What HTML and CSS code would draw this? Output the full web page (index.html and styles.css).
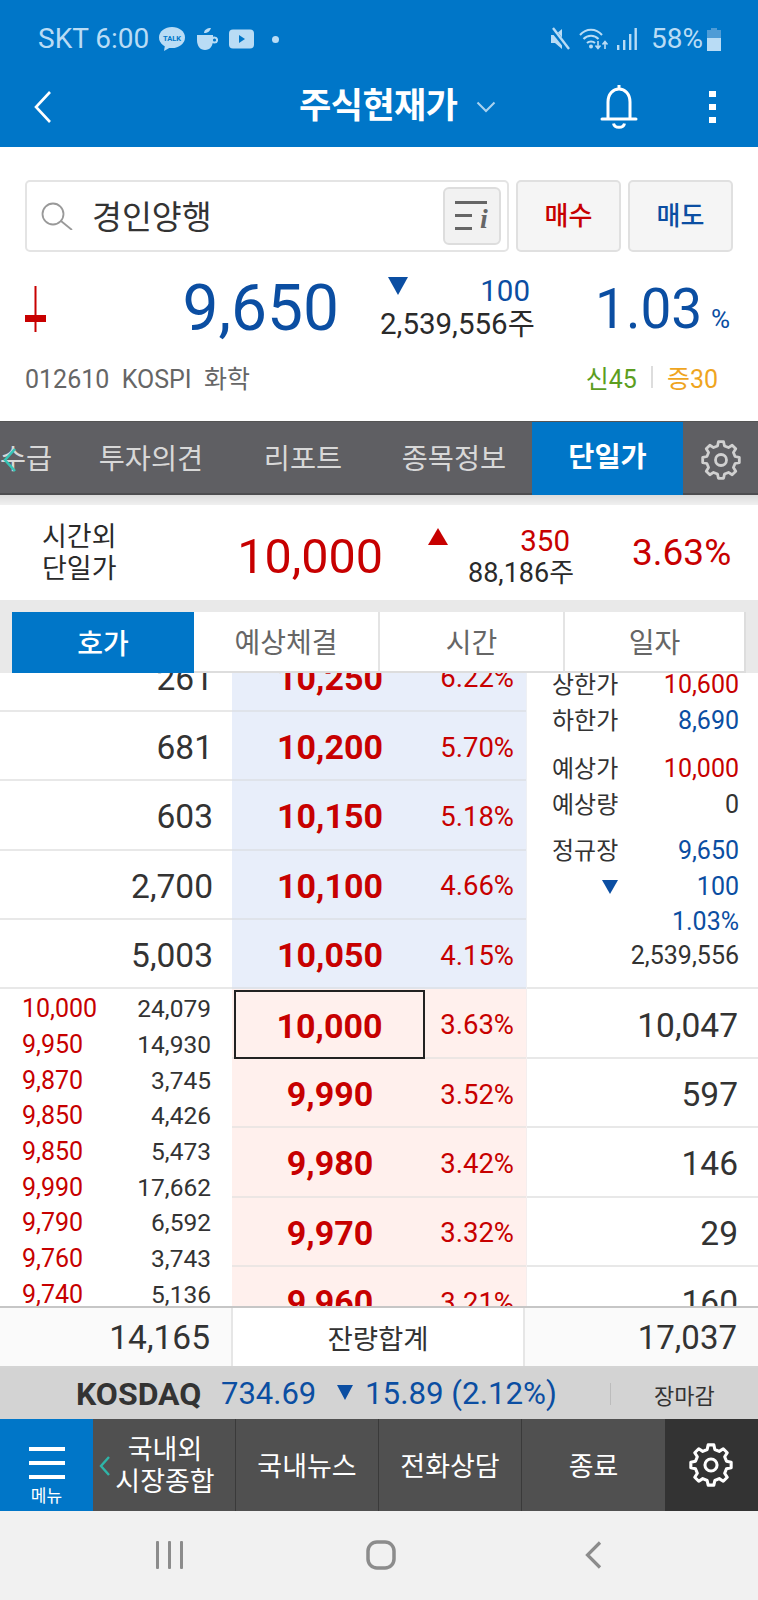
FILE: index.html
```html
<!DOCTYPE html>
<html lang="ko">
<head>
<meta charset="utf-8">
<title>주식현재가</title>
<link rel="stylesheet" href="styles.css">
</head>
<body>
<svg class="defs" width="0" height="0" aria-hidden="true">
  <symbol id="gear" viewBox="0 0 40 40">
    <polygon points="16.5,5.93 17.43,1.68 22.57,1.68 23.5,5.93 27.47,7.58 31.14,5.23 34.77,8.86 32.42,12.53 34.07,16.5 38.32,17.43 38.32,22.57 34.07,23.5 32.42,27.47 34.77,31.14 31.14,34.77 27.47,32.42 23.5,34.07 22.57,38.32 17.43,38.32 16.5,34.07 12.53,32.42 8.86,34.77 5.23,31.14 7.58,27.47 5.93,23.5 1.68,22.57 1.68,17.43 5.93,16.5 7.58,12.53 5.23,8.86 8.86,5.23 12.53,7.58" fill="none" stroke="currentColor" stroke-width="2.8" stroke-linejoin="round"/>
    <circle cx="20" cy="20" r="5.5" fill="none" stroke="currentColor" stroke-width="2.8"/>
  </symbol>
</svg>
<div class="screen">
  <header class="header">
    <div class="status">
      <span class="status-time">SKT 6:00</span>
      <svg class="ic-talk" viewBox="0 0 26 24"><ellipse cx="13" cy="10.5" rx="13" ry="10.5" fill="#b9dcf5"/><path d="M6 18l-1 6 7-4z" fill="#b9dcf5"/><text x="13" y="14" class="talk-text">TALK</text></svg>
      <svg class="ic-cup" viewBox="0 0 22 24"><path d="M8 6c0-3 3-5 7-5-1 3-3 5-7 5z" fill="#b9dcf5"/><path d="M1 8h16v5c0 6-3 10-8 10S1 19 1 13z" fill="#b9dcf5"/><circle cx="18.5" cy="13" r="2.6" fill="none" stroke="#b9dcf5" stroke-width="2"/></svg>
      <svg class="ic-play" viewBox="0 0 25 20"><rect width="25" height="19" y=".5" rx="4" fill="#b9dcf5"/><path d="M10 6l6 4-6 4z" fill="#0076c8"/></svg>
      <span class="status-dot"></span>
      <svg class="ic-mute" viewBox="0 0 20 24"><path d="M1 8h4l7-6v20l-7-6H1z" fill="#b9dcf5"/><path d="M2 2l16 20" stroke="#0076c8" stroke-width="5"/><path d="M3 1l16 21" stroke="#b9dcf5" stroke-width="2.4"/></svg>
      <svg class="ic-wifi" viewBox="0 0 30 22"><g fill="none" stroke="#b9dcf5" stroke-width="2"><path d="M1 7c6-7 16-7 22 0"/><path d="M4.500 11c4-4.500 11-4.500 15 0"/><path d="M8 15c2-2 6-2 8 0"/></g><circle cx="12" cy="18.500" r="2" fill="#b9dcf5"/><path d="M19 13v7m-2.500-2.500l2.500 3 2.500-3M26 21v-7m-2.500 2.500l2.500-3 2.500 3" fill="none" stroke="#b9dcf5" stroke-width="1.600"/></svg>
      <svg class="ic-signal" viewBox="0 0 20 24"><g fill="#b9dcf5"><rect x="0" y="18" width="2.400" height="5"/><rect x="6" y="13" width="2.400" height="10"/><rect x="12" y="7" width="2.400" height="16"/><rect x="17.500" y="1" width="2.400" height="22"/></g></svg>
      <span class="status-batt">58%</span>
      <svg class="ic-batt" viewBox="0 0 14 23"><path d="M4 0h6v2h4v21H0V2h4z" fill="#4f9cd6"/><path d="M0 10h14v13H0z" fill="#b9dcf5"/></svg>
    </div>
    <div class="appbar">
      <svg class="ic-back" viewBox="0 0 18 34"><path d="M16 2L2 17l14 15" fill="none" stroke="#fff" stroke-width="2.600"/></svg>
      <h1 class="title">주식현재가</h1>
      <svg class="ic-chev" viewBox="0 0 20 12"><path d="M1.500 1.500L10 10l8.500-8.500" fill="none" stroke="#a9d2ef" stroke-width="2"/></svg>
      <svg class="ic-bell" viewBox="0 0 38 44"><path d="M19 0v4M8 34V17C8 9 13 4 19 4s11 5 11 13v17l6 0H2z" fill="none" stroke="#fff" stroke-width="3" stroke-linejoin="round"/><path d="M13.500 38.500c1 5 10 5 11 0" fill="none" stroke="#fff" stroke-width="3"/></svg>
      <div class="dots"><span></span><span></span><span></span></div>
    </div>
  </header>

  <section class="summary">
    <div class="search-row">
      <div class="search">
        <svg class="ic-search" viewBox="0 0 32 28"><circle cx="12" cy="12" r="10.500" fill="none" stroke="#999" stroke-width="1.800"/><path d="M20 19l11 9" stroke="#999" stroke-width="1.800"/></svg>
        <span class="search-text">경인양행</span>
        <div class="info-btn"><svg class="ic-info" viewBox="0 0 34 30"><g fill="#666"><rect x="0" y="0" width="32" height="3"/><rect x="0" y="13" width="17" height="3"/><rect x="0" y="26" width="17" height="3"/></g></svg><span class="info-i">i</span></div>
      </div>
      <button class="trade trade-buy">매수</button>
      <button class="trade trade-sell">매도</button>
    </div>
    <div class="quote">
      <svg class="candle" viewBox="0 0 21 46"><rect x="9.500" width="2" height="46" fill="#c80000"/><rect y="29" width="21" height="7" fill="#c80000"/></svg>
      <span class="quote-price">9,650</span>
      <div class="quote-change">
        <div class="quote-delta"><span class="tri tri-down-lg"></span><span>100</span></div>
        <div class="quote-vol">2,539,556주</div>
      </div>
      <span class="quote-rate">1.03</span>
      <span class="quote-pct">%</span>
    </div>
    <div class="meta">
      <span class="meta-left">012610&nbsp; KOSPI&nbsp; 화학</span>
      <span class="meta-right"><span class="credit">신45</span><i class="meta-sep"></i><span class="margin">증30</span></span>
    </div>
  </section>

  <nav class="tabs">
    <svg class="tab-teal" viewBox="0 0 14 24"><path d="M12 1L2 12l10 11" fill="none" stroke="#35c4b6" stroke-width="2.600"/></svg>
    <span class="tab tab-a">수급</span>
    <span class="tab tab-b">투자의견</span>
    <span class="tab tab-c">리포트</span>
    <span class="tab tab-d">종목정보</span>
    <span class="tab tab-on">단일가</span>
    <svg class="tab-gear"><use href="#gear"/></svg>
  </nav>
  <div class="tabs-shadow"></div>

  <section class="after">
    <div class="after-label">시간외<br>단일가</div>
    <span class="after-price">10,000</span>
    <div class="after-change">
      <div class="after-delta"><span class="tri tri-up-lg"></span><span>350</span></div>
      <div class="after-vol">88,186주</div>
    </div>
    <span class="after-rate">3.63%</span>
  </section>

  <div class="seg-wrap">
    <div class="seg">
      <span class="seg-item seg-on">호가</span>
      <span class="seg-item">예상체결</span>
      <span class="seg-item">시간</span>
      <span class="seg-item">일자</span>
    </div>
  </div>

  <section class="book">
    <div class="book-scroll">
      <div class="ask">
        <div class="col-qty">
          <div class="row qty">261</div>
          <div class="row qty">681</div>
          <div class="row qty">603</div>
          <div class="row qty">2,700</div>
          <div class="row qty">5,003</div>
        </div>
        <div class="col-mid col-ask">
          <div class="row"><span class="p">10,250</span><span class="r">6.22%</span></div>
          <div class="row"><span class="p">10,200</span><span class="r">5.70%</span></div>
          <div class="row"><span class="p">10,150</span><span class="r">5.18%</span></div>
          <div class="row"><span class="p">10,100</span><span class="r">4.66%</span></div>
          <div class="row"><span class="p">10,050</span><span class="r">4.15%</span></div>
        </div>
        <div class="side">
          <div class="side-row"><span class="side-label">상한가</span><span class="red">10,600</span></div>
          <div class="side-row"><span class="side-label">하한가</span><span class="blue">8,690</span></div>
          <div class="side-row side-gap"><span class="side-label">예상가</span><span class="red">10,000</span></div>
          <div class="side-row"><span class="side-label">예상량</span><span>0</span></div>
          <div class="side-row side-gap2"><span class="side-label">정규장</span><span class="blue">9,650</span></div>
          <div class="side-row"><span class="side-tri"><span class="tri tri-down-sm"></span></span><span class="blue">100</span></div>
          <div class="side-row side-end"><span class="blue">1.03%</span></div>
          <div class="side-row side-end"><span>2,539,556</span></div>
        </div>
      </div>
      <div class="bid">
        <div class="ticks">
          <div class="tick"><span class="tick-p">10,000</span><span>24,079</span></div>
          <div class="tick"><span class="tick-p">9,950</span><span>14,930</span></div>
          <div class="tick"><span class="tick-p">9,870</span><span>3,745</span></div>
          <div class="tick"><span class="tick-p">9,850</span><span>4,426</span></div>
          <div class="tick"><span class="tick-p">9,850</span><span>5,473</span></div>
          <div class="tick"><span class="tick-p">9,990</span><span>17,662</span></div>
          <div class="tick"><span class="tick-p">9,790</span><span>6,592</span></div>
          <div class="tick"><span class="tick-p">9,760</span><span>3,743</span></div>
          <div class="tick"><span class="tick-p">9,740</span><span>5,136</span></div>
        </div>
        <div class="col-mid col-bid">
          <div class="row"><span class="p p-now">10,000</span><span class="r">3.63%</span></div>
          <div class="row"><span class="p">9,990</span><span class="r">3.52%</span></div>
          <div class="row"><span class="p">9,980</span><span class="r">3.42%</span></div>
          <div class="row"><span class="p">9,970</span><span class="r">3.32%</span></div>
          <div class="row"><span class="p">9,960</span><span class="r">3.21%</span></div>
        </div>
        <div class="col-right">
          <div class="row qty">10,047</div>
          <div class="row qty">597</div>
          <div class="row qty">146</div>
          <div class="row qty">29</div>
          <div class="row qty">160</div>
        </div>
      </div>
    </div>
  </section>

  <section class="totals">
    <span class="tot tot-l">14,165</span>
    <span class="tot tot-m">잔량합계</span>
    <span class="tot tot-r">17,037</span>
  </section>

  <section class="index">
    <b class="idx-name">KOSDAQ</b>
    <span class="idx-val">734.69</span>
    <span class="tri tri-idx"></span>
    <span class="idx-chg">15.89 (2.12%)</span>
    <i class="idx-sep"></i>
    <span class="idx-state">장마감</span>
  </section>

  <nav class="bottom">
    <div class="menu">
      <span class="burger"><i></i><i></i><i></i></span>
      <span class="menu-text">메뉴</span>
    </div>
    <div class="nav-item nav-first">
      <svg class="nav-teal" viewBox="0 0 12 20"><path d="M10 1L2 10l8 9" fill="none" stroke="#2fb5a8" stroke-width="2.400"/></svg>
      <span>국내외<br>시장종합</span>
    </div>
    <div class="nav-item">국내뉴스</div>
    <div class="nav-item">전화상담</div>
    <div class="nav-item nav-last">종료</div>
    <div class="nav-gear"><svg class="gear-svg"><use href="#gear"/></svg></div>
  </nav>

  <footer class="sysnav">
    <svg class="sys-recent" viewBox="0 0 27 28"><g fill="#8c8c8c"><rect x="0" width="3" height="28" rx="1"/><rect x="12" width="3" height="28" rx="1"/><rect x="24" width="3" height="28" rx="1"/></g></svg>
    <svg class="sys-home" viewBox="0 0 30 30"><rect x="2" y="2" width="26" height="26" rx="9" fill="none" stroke="#8c8c8c" stroke-width="3.500"/></svg>
    <svg class="sys-back" viewBox="0 0 17 28"><path d="M15 1.500L2.500 14 15 26.500" fill="none" stroke="#8c8c8c" stroke-width="3.200"/></svg>
  </footer>
</div>
</body>
</html>
```
FILE: styles.css
```css
* { box-sizing: border-box; }
html, body { margin: 0; padding: 0; background: #fff; }
body { font-family: Roboto, "Noto Sans CJK KR", sans-serif; color: #333; }
.defs { position: absolute; }
.screen { width: 758px; height: 1600px; overflow: hidden; display: flex; flex-direction: column; }
i { font-style: normal; }
.red { color: #c70000; }
.blue { color: #0b4ea2; }

/* header */
.header { background: #0076c8; height: 147px; flex: none; }
.status { height: 78px; display: flex; align-items: center; padding-left: 38px; color: #b9dcf5; font-size: 28px; }
.status-time { width: 121px; white-space: nowrap; line-height: 30px; }
.ic-talk { width: 26px; height: 24px; flex: none; }
.talk-text { font: 700 7.500px Roboto, sans-serif; fill: #0076c8; text-anchor: middle; }
.ic-cup { width: 22px; height: 24px; margin-left: 11px; flex: none; }
.ic-play { width: 25px; height: 20px; margin-left: 11px; flex: none; }
.status-dot { width: 7px; height: 7px; border-radius: 50%; background: #b9dcf5; margin-left: 18px; flex: none; }
.ic-mute { width: 20px; height: 24px; margin-left: 271px; flex: none; }
.ic-wifi { width: 30px; height: 22px; margin-left: 9px; flex: none; }
.ic-signal { width: 20px; height: 24px; margin-left: 8px; flex: none; }
.status-batt { margin-left: 14px; width: 56px; line-height: 30px; white-space: nowrap; }
.ic-batt { width: 14px; height: 23px; flex: none; }
.appbar { height: 69px; display: flex; align-items: center; padding: 0 0 11px 34px; color: #fff; }
.ic-back { width: 18px; height: 34px; flex: none; }
.title { margin: 0 0 0 247px; font-size: 35px; font-weight: 700; line-height: 40px; letter-spacing: -.5px; width: 160px; white-space: nowrap; }
.ic-chev { width: 20px; height: 12px; margin-left: 17px; flex: none; }
.ic-bell { width: 38px; height: 44px; margin-left: 104px; flex: none; }
.dots { margin-left: 71px; display: flex; flex-direction: column; gap: 7px; }
.dots span { width: 7px; height: 6px; background: #fff; display: block; }

/* summary */
.summary { height: 274px; flex: none; padding-top: 33px; background: #fff; }
.search-row { display: flex; height: 72px; padding-left: 25px; gap: 7px; }
.search { width: 484px; border: 2px solid #e4e4e4; border-radius: 5px; display: flex; align-items: center; padding-left: 14px; padding-right: 6px; }
.ic-search { width: 32px; height: 28px; flex: none; }
.search-text { margin: 4px 0 0 19px; font-size: 32.500px; line-height: 40px; color: #333; flex: 1; }
.info-btn { width: 58px; height: 58px; background: #f2f2f2; border: 2px solid #ddd; border-radius: 6px; display: flex; align-items: center; justify-content: flex-start; padding-left: 10px; flex: none; position: relative; }
.ic-info { width: 34px; height: 30px; }
.info-i { position: absolute; left: 35px; top: 14px; font: italic 700 28px/32px "Liberation Serif", serif; color: #666; }
.trade { width: 105px; background: #f5f5f5; border: 2px solid #e0e0e0; border-radius: 5px; font: 500 26px/36px Roboto, "Noto Sans CJK KR", sans-serif; padding: 0; }
.trade-buy { color: #c70000; }
.trade-sell { color: #0b4ea2; }
.quote { margin-top: 30px; height: 54px; display: flex; align-items: center; padding-left: 25px; }
.candle { width: 21px; height: 46px; flex: none; }
.quote-price { width: 293px; text-align: right; font-size: 64px; line-height: 60px; color: #0b4ea2; flex: none; }
.quote-change { margin: -3px 0 0 41px; width: 156px; flex: none; font-size: 29.500px; line-height: 33px; }
.quote-delta { display: flex; justify-content: space-between; align-items: flex-start; padding: 0 6px 0 8px; color: #0b4ea2; }
.quote-vol { color: #2a2a2a; white-space: nowrap; }
.quote-rate { margin-left: 59px; font-size: 55px; line-height: 60px; color: #0b4ea2; width: 116px; flex: none; }
.quote-pct { font-size: 26px; line-height: 30px; color: #0b4ea2; margin-top: 20px; }
.meta { margin-top: 24px; display: flex; justify-content: space-between; align-items: center; padding: 0 40px 0 25px; height: 34px; font-size: 25px; color: #666; }
.meta-right { display: flex; align-items: center; }
.credit { color: #5c9e1f; }
.margin { color: #efa51f; }
.meta-sep { width: 2px; height: 22px; background: #ddd; margin: 0 14px; }

/* triangles */
.tri { display: block; width: 0; height: 0; border-style: solid; border-color: transparent; }
.tri-down-lg { border-width: 18px 10px 0; border-top-color: #0b4ea2; margin-top: 2px; }
.tri-up-lg { border-width: 0 10.500px 17px; border-bottom-color: #c70000; margin-top: 3px; }
.tri-down-sm { border-width: 14px 8px 0; border-top-color: #0b4ea2; }
.tri-idx { border-width: 15px 8.500px 0; border-top-color: #0b4ea2; margin: 0 12px 3px 22px; }

/* tabs */
.tabs { height: 74px; flex: none; background: #5f5f63; display: flex; align-items: center; position: relative; color: #d8d8d8; font-size: 28.400px; border-bottom: 2px solid #4d4d50; border-top: 1px solid #555; padding-top: 4px; }
.tab { line-height: 36px; text-align: center; white-space: nowrap; flex: none; }
.tab-a { width: 76px; text-align: left; padding-left: 0; }
.tab-b { width: 150px; }
.tab-c { width: 154px; }
.tab-d { width: 152px; padding-right: 4px; }
.tab-on { width: 151px; align-self: stretch; background: #0076c8; color: #fff; font-weight: 700; line-height: 72px; margin: -4px 0 -2px; height: 73px; }
.tab-gear { width: 40px; height: 40px; margin-left: 18px; color: #d0d0d0; flex: none; }
.tab-teal { position: absolute; left: 3px; top: 26px; width: 14px; height: 24px; }
.tabs-shadow { height: 10px; flex: none; background: linear-gradient(#dcdcdc, #f0f0f0); }

/* after-hours */
.after { height: 95px; flex: none; background: #fff; display: flex; align-items: center; padding-left: 42px; }
.after-label { width: 90px; font-size: 27px; line-height: 32px; color: #2a2a2a; flex: none; }
.after-price { width: 251px; text-align: right; font-size: 48.500px; line-height: 56px; color: #c70000; flex: none; margin-top: 8px; }
.after-change { margin-left: 45px; width: 146px; flex: none; font-size: 27px; line-height: 32px; color: #2a2a2a; text-align: right; margin-top: 8px; }
.after-delta { display: flex; justify-content: space-between; align-items: flex-start; padding-right: 4px; color: #c70000; font-size: 29.500px; }
.after-rate { margin-left: 58px; font-size: 37px; line-height: 40px; color: #c70000; flex: none; }

/* segment */
.seg-wrap { height: 73px; flex: none; background: #e9e9e9; padding: 12px 12px 0; }
.seg { height: 61px; display: grid; grid-template-columns: 182px 186px 185px 1fr; background: #fff; border-right: 2px solid #ddd; }
.seg-item { display: flex; align-items: center; justify-content: center; font-size: 28px; color: #666; border-right: 2px solid #e4e4e4; border-bottom: 2px solid #ddd; padding-bottom: 1px; }
.seg-item:last-child { border-right: 0; }
.seg-on { background: #0076c8; color: #fff; font-weight: 500; border: 0; }

/* order book */
.book { height: 633px; flex: none; overflow: hidden; background: #fff; }
.book-scroll { margin-top: -30.500px; }
.ask, .bid { display: grid; grid-template-columns: 232px 295px 231px; }
.row { height: 69.400px; display: flex; align-items: center; border-bottom: 2px solid #e8e8e8; }
.qty { justify-content: flex-end; font-size: 33.500px; color: #333; padding: 4px 19px 0 0; }
.col-right .qty { padding-right: 20px; }
.col-right .row { border-bottom-color: #e8e8e8; }
.col-ask { background: #e8eefa; border-right: 1px solid #eef0f4; }
.col-ask .row { border-bottom-color: #dfe3ea; }
.col-bid { background: #fff0ed; border-right: 1px solid #f4eeee; }
.col-bid .row { border-bottom-color: #ece6e4; }
.p { width: 196px; flex: none; text-align: center; font-size: 34px; font-weight: 700; color: #c70000; padding-top: 3px; }
.p-now { align-self: stretch; display: flex; align-items: center; justify-content: center; width: 191px; margin: 1px 3px -2px 2px; border: 2.500px solid #222; padding-top: 2px; }
.r { flex: 1; text-align: right; padding: 3px 12px 0 0; font-size: 27.500px; color: #c70000; }
.side { border-bottom: 2px solid #e8e8e8; padding: 24.500px 19px 0 25px; font-size: 25px; color: #333; }
.side-label { font-size: 24px; }
.side-row { display: flex; justify-content: space-between; align-items: center; height: 36px; line-height: 36px; }
.side-gap { margin-top: 12px; }
.side-gap2 { margin-top: 10px; }
.side-tri { width: 66px; display: flex; justify-content: flex-end; }
.side-end { justify-content: flex-end; height: 34px; }
.ticks { padding: 2px 21px 0 22px; font-size: 24.500px; color: #333; }
.tick { display: flex; justify-content: space-between; align-items: center; height: 35.700px; line-height: 36px; }
.tick-p { color: #c70000; font-size: 25px; }

/* totals */
.totals { height: 62px; flex: none; display: grid; grid-template-columns: 231px 294px 233px; background: #fff; border-top: 2px solid #c6c6c6; border-bottom: 2px solid #d4d4d4; }
.tot { display: flex; align-items: center; font-size: 33.500px; color: #333; }
.tot-l { background: #fafafa; justify-content: flex-end; padding-right: 21px; }
.tot-m { justify-content: center; font-size: 27.500px; border-left: 2px solid #e6e6e6; border-right: 2px solid #e6e6e6; }
.tot-r { background: #fafafa; justify-content: flex-end; padding-right: 21px; font-size: 33px; }

/* index bar */
.index { height: 51px; flex: none; display: flex; align-items: center; background: #d3d3d3; padding-left: 76px; color: #333; }
.idx-name { font-size: 32px; font-weight: 700; width: 145px; flex: none; }
.idx-val { font-size: 31px; color: #0b4ea2; width: 94px; flex: none; white-space: nowrap; }
.idx-chg { font-size: 31.300px; color: #0b4ea2; white-space: nowrap; width: 190px; flex: none; }
.idx-sep { width: 1px; height: 22px; background: #bcbcbc; margin-left: 55px; flex: none; }
.idx-state { margin-left: 43px; font-size: 22px; color: #333; }

/* bottom nav */
.bottom { height: 92px; flex: none; display: flex; background: #505050; color: #fff; font-size: 27px; }
.menu { width: 93px; flex: none; background: #0076c8; display: flex; flex-direction: column; align-items: center; padding-top: 28px; }
.burger { width: 36px; display: flex; flex-direction: column; gap: 10.500px; }
.burger i { display: block; height: 3.500px; background: #fff; }
.menu-text { font-size: 17px; line-height: 20px; margin-top: 7px; }
.nav-item { width: 143px; flex: none; display: flex; align-items: center; justify-content: center; border-left: 1px solid #3a3a3a; line-height: 32px; text-align: center; padding-top: 4px; }
.nav-first { width: 142px; border-left: 0; border-right: 0; position: relative; padding: 2px 0 0 2px; }
.nav-last { width: 144px; }
.nav-teal { position: absolute; left: 6px; top: 37px; width: 12px; height: 20px; }
.nav-gear { flex: 1; background: #333; display: flex; align-items: center; justify-content: center; }
.gear-svg { width: 44px; height: 44px; color: #fff; margin-right: 1px; }

/* system nav */
.sysnav { flex: 1; background: #f1f1f1; display: flex; align-items: center; padding: 0 0 2px 156px; }
.sys-recent { width: 27px; height: 28px; flex: none; }
.sys-home { width: 30px; height: 30px; margin-left: 183px; flex: none; }
.sys-back { width: 17px; height: 28px; margin-left: 189px; flex: none; }
```
